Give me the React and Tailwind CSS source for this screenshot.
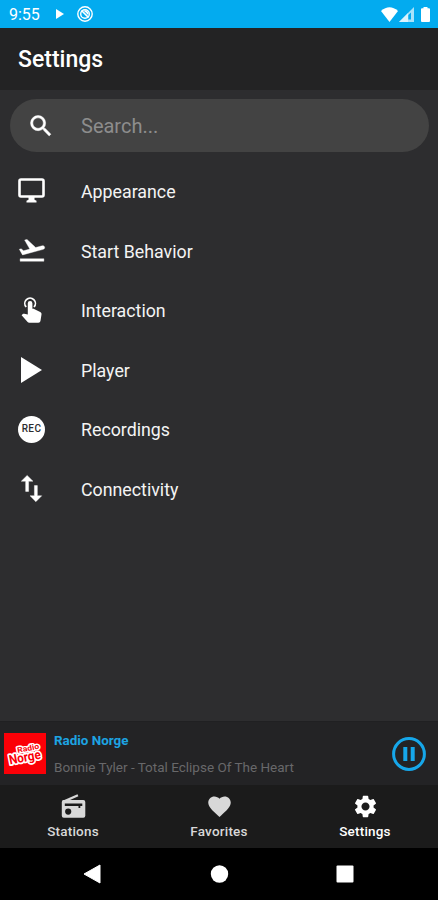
import React from "react";
import { MdFavorite, MdSettings } from "react-icons/md";

const SearchIcon = () => (
  <svg viewBox="0 0 24 24" className="w-7 h-7" fill="currentColor" stroke="currentColor" strokeWidth="0.4">
    <path d="M15.500 14h-.79l-.28-.27A6.471 6.471 0 0 0 16 9.500 6.500 6.500 0 1 0 9.500 16c1.610 0 3.090-.59 4.230-1.570l.27.28v.79l5 4.990L20.490 19l-4.990-5zm-6 0C7.010 14 5 11.990 5 9.500S7.010 5 9.500 5 14 7.010 14 9.500 11.990 14 9.500 14z" />
  </svg>
);

const MonitorIcon = () => (
  <svg viewBox="0 0 27 25" className="w-[27px] h-[25px]" fill="currentColor">
    <rect x="1.500" y="1.500" width="24" height="17" rx="1.500" fill="none" stroke="currentColor" strokeWidth="2.600" />
    <path d="M10.500 19h6v2.800l2 1V24.500H8.500V22.800l2-1z" />
  </svg>
);

const TakeoffIcon = () => (
  <svg viewBox="0 0 24 24" className="w-[30px] h-[30px]" fill="currentColor" stroke="currentColor" strokeWidth="0.3">
    <path d="M2.500 19h19v2h-19zm19.570-9.360c-.21-.8-1.040-1.280-1.840-1.060L14.920 10l-6.900-6.430-1.930.51 4.140 7.170-4.970 1.330-1.970-1.540-1.450.39 2.590 4.490L21 11.490c.81-.23 1.280-1.050 1.070-1.850z" />
  </svg>
);

const TouchIcon = () => (
  <svg viewBox="0 0 22 27" className="w-[22px] h-[27px]" fill="currentColor">
    <path d="M5.200 11A5.300 5.300 0 1 1 13 11" fill="none" stroke="currentColor" strokeWidth="1.700" />
    <path d="M6.800 7.200a2.300 2.300 0 0 1 4.600 0v5.600h1.200l6.600 3.300c1 .5 1.500 1.400 1.300 2.400l-1 6.200c-.2 1.200-1 2-2.200 2H8.200c-.6 0-1.200-.3-1.600-.7L.6 19.300l1.200-1.200c.4-.4 1-.5 1.500-.4l3.500.8z" />
  </svg>
);

const PlayIcon = () => (
  <svg viewBox="0 0 21 26" className="w-[21px] h-[26px] mr-px" fill="currentColor">
    <path d="M0 0 21 13 0 26z" />
  </svg>
);

const RecIcon = () => (
  <span className="flex items-center justify-center w-[27px] h-[27px] rounded-full bg-white text-[#2d2d2f] text-[10px] leading-none font-medium tracking-[0.4px]">
    REC
  </span>
);

const SwapIcon = () => (
  <svg viewBox="0 0 24 24" className="w-[35px] h-[35px]" fill="currentColor" stroke="currentColor" strokeWidth="0.3">
    <path d="M16 17.010V10h-2v7.010h-3L15 21l4-3.990h-3zM9 3 5 6.990h3V14h2V6.990h3L9 3z" />
  </svg>
);

const RadioIcon = () => (
  <svg viewBox="0 0 27 27" className="w-[27px] h-[27px]" fill="currentColor">
    <path d="M2.500 7.800 17.500 1.300l.9 1.900L9.500 7.200 4 9z" />
    <path
      fillRule="evenodd"
      d="M3.800 7H23.300a2 2 0 0 1 2 2V22.800a2 2 0 0 1-2 2H3.800a2 2 0 0 1-2-2V9a2 2 0 0 1 2-2zM4.800 10.400v2.700h13.700v2h1.800v-2h2V10.400zM8.200 15.500a3.100 3.100 0 1 0 0 6.200 3.100 3.100 0 0 0 0-6.200z"
    />
  </svg>
);

const settings = [
  { label: "Appearance", icon: <MonitorIcon /> },
  { label: "Start Behavior", icon: <TakeoffIcon /> },
  { label: "Interaction", icon: <TouchIcon /> },
  { label: "Player", icon: <PlayIcon /> },
  { label: "Recordings", icon: <RecIcon /> },
  { label: "Connectivity", icon: <SwapIcon /> },
];

const tabs = [
  { label: "Stations", icon: <RadioIcon /> },
  { label: "Favorites", icon: <MdFavorite size={27} /> },
  { label: "Settings", icon: <MdSettings size={27} />, active: true },
];

function StatusBar() {
  return (
    <div className="h-7 shrink-0 bg-[#03abef] flex items-center justify-between pl-[9px] pr-[8px] text-white">
      <div className="flex items-center">
        <span className="w-[47px] pt-px text-[16px] leading-none">9:55</span>
        <svg viewBox="0 0 8 10" className="w-2 h-2.5" fill="currentColor">
          <path d="M0 0 8 5 0 10z" />
        </svg>
        <svg viewBox="0 0 16 16" className="w-4 h-4 ml-[13px]" fill="none" stroke="currentColor">
          <circle cx="8" cy="8" r="7.200" strokeWidth="1.400" />
          <circle cx="8" cy="8" r="4.300" strokeWidth="1.400" />
          <path d="M4.500 4.500 11.500 11.500M7.500 5.200a3 3 0 0 1 3.200 3.200" strokeWidth="1.700" />
        </svg>
      </div>
      <div className="flex items-center">
        <svg viewBox="0 0 17 15" className="w-[17px] h-[15px]" fill="currentColor">
          <path d="M0 4Q8.500-3.500 17 4L8.500 15z" />
        </svg>
        <svg viewBox="0 0 15 15" className="w-[15px] h-[15px] ml-px" fill="currentColor">
          <path d="M0 15 15 0V15z" opacity=".65" />
          <path d="M0 15 9 6V15z" opacity=".6" />
          <path d="M9.300 8 12 5.600V12.500H9.300z" fill="#03abef" />
        </svg>
        <svg viewBox="0 0 9 15" className="w-[9px] h-[15px] ml-[7px]" fill="currentColor">
          <path d="M2.500 0h4v1.300H8a1 1 0 0 1 1 1V14a1 1 0 0 1-1 1H1a1 1 0 0 1-1-1V2.300a1 1 0 0 1 1-1h1.500z" />
        </svg>
      </div>
    </div>
  );
}

// white outlined lettering on the red cover
function StationLogo() {
  return (
    <svg viewBox="0 0 42 41" className="w-[42px] h-[41px] shrink-0 bg-[#fb0007]">
      <g
        fill="#fb0007"
        stroke="#fff"
        paintOrder="stroke"
        strokeLinejoin="round"
        fontFamily="Roboto, sans-serif"
        fontWeight="700"
        transform="rotate(-11 21 20)"
      >
        <text x="14" y="18.500" fontSize="7.500" strokeWidth="2.800" textLength="22" lengthAdjust="spacingAndGlyphs">
          Radio
        </text>
        <text x="4" y="28.500" fontSize="13" strokeWidth="3.500" textLength="32" lengthAdjust="spacingAndGlyphs">
          Norge
        </text>
      </g>
    </svg>
  );
}

function PlayerBar() {
  return (
    <div className="h-[64px] shrink-0 bg-[#232325] border-t border-[#202022] flex items-center pl-1 pr-3">
      <StationLogo />
      <div className="ml-2 mt-px flex-1 whitespace-nowrap">
        <div className="text-[13.4px] font-bold leading-[18px] text-[#1da4e2]">Radio Norge</div>
        <div className="mt-[8px] text-[13.5px] leading-[18px] text-[#68686a]">
          Bonnie Tyler - Total Eclipse Of The Heart
        </div>
      </div>
      <svg viewBox="0 0 34 34" className="w-[34px] h-[34px]" fill="none" stroke="#16a7ea">
        <circle cx="17" cy="17" r="15.400" strokeWidth="3" />
        <path d="M13.300 10v14M20.700 10v14" strokeWidth="4" />
      </svg>
    </div>
  );
}

export default function App() {
  return (
    <div className="flex flex-col w-full h-[900px] overflow-hidden bg-[#2d2d2f] font-['Roboto',sans-serif]">
      <StatusBar />
      <header className="h-[62px] shrink-0 bg-[#232324] flex items-center pl-[18px] pt-[2px] text-[23px] font-medium text-white">
        Settings
      </header>

      <main className="flex-1">
        <div className="mt-[9px] ml-[10px] mr-[9px] h-[53px] rounded-full bg-[#434343] flex items-center">
          <div className="w-[61px] flex justify-center text-white">
            <SearchIcon />
          </div>
          <span className="ml-[10px] text-[20px] text-[#8d8d8d]">Search...</span>
        </div>
        <ul className="mt-[9px]">
          {settings.map(({ label, icon }) => (
            <li key={label} className="h-[59.6px] flex items-center text-white">
              <span className="w-[63px] flex justify-center">{icon}</span>
              <span className="ml-[18px] pt-[3px] text-[17.8px] text-[#f4f4f4]">{label}</span>
            </li>
          ))}
        </ul>
      </main>

      <PlayerBar />
      <nav className="h-[63px] shrink-0 bg-[#1b1b1b] grid grid-cols-3">
        {tabs.map(({ label, icon, active }) => (
          <div
            key={label}
            className={`flex flex-col items-center pt-[8px] ${active ? "text-white" : "text-[#d8d8d8]"}`}
          >
            {icon}
            <span className="mt-[2px] text-[13.5px] leading-[18px] font-medium tracking-[0.2px]">{label}</span>
          </div>
        ))}
      </nav>
      <div className="h-[52px] shrink-0 bg-black flex items-center text-white">
        <svg viewBox="0 0 438 52" className="w-full h-[52px]" fill="currentColor">
          <path d="M84 26 100 17V35z" strokeWidth="1" stroke="currentColor" strokeLinejoin="round" />
          <circle cx="219.500" cy="26" r="8.700" />
          <rect x="336.500" y="17.500" width="17" height="17" rx="1" />
        </svg>
      </div>
    </div>
  );
}
